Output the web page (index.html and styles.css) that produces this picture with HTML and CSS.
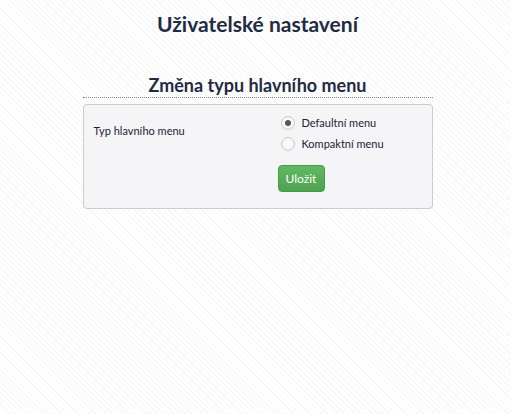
FILE: index.html
```html
<!DOCTYPE html>
<html lang="cs">
<head>
  <meta charset="UTF-8" />
  <title>Uživatelské nastavení</title>
  <link rel="stylesheet" href="styles.css">
</head>
<body>
  <div class="page">
    <h1>Uživatelské nastavení</h1>
    <div class="section">
      <h2>Změna typu hlavního menu</h2>
      <form class="panel">
        <div class="row">
          <label class="field-label">Typ hlavního menu</label>
          <div class="options">
            <label class="radio"><input type="radio" name="menu" checked> Defaultní menu</label>
            <label class="radio"><input type="radio" name="menu"> Kompaktní menu</label>
            <button type="button" class="btn-save">Uložit</button>
          </div>
        </div>
      </form>
    </div>
  </div>
</body>
</html>
```

FILE: styles.css
```css
body {
  margin: 0;
  font-family: 'Lato', 'Open Sans', sans-serif;
  color: #1f2b42;
  background-color: #fff;
  background-image: repeating-linear-gradient(45deg, #fff 0, #fff 3px, #f6f6f6 3px, #f6f6f6 4px);
  min-height: 414px;
}

.page {
  padding-top: 10px;
}

h1 {
  margin: 0;
  text-align: center;
  font-size: 21px;
  font-weight: 700;
  line-height: 28px;
  padding-left: 4px;
}

.section {
  width: 350px;
  margin: 36px auto 0;
  position: relative;
  left: 2px;
}

h2 {
  margin: 0;
  text-align: center;
  font-size: 18px;
  font-weight: 700;
  line-height: 22px;
  padding-bottom: 1px;
  border-bottom: 1px dotted #888;
}

.panel {
  margin-top: 6px;
  background: #f5f5f7;
  border: 1px solid #ccc;
  border-radius: 4px;
  padding: 7px 10px 16px;
}

.row {
  display: flex;
}

.field-label {
  width: 184px;
  font-size: 11px;
  padding-top: 12px;
  color: #1a2438;
}

.options {
  display: flex;
  flex-direction: column;
  align-items: flex-start;
}

.radio {
  display: flex;
  align-items: center;
  font-size: 11px;
  height: 21px;
  color: #1a2438;
}

.radio input {
  appearance: none;
  width: 14px;
  height: 14px;
  margin: 0 7px 0 3px;
  border: 1px solid #cbcbcb;
  border-radius: 50%;
  background: radial-gradient(circle at 50% 40%, #fff, #eee);
  position: relative;
}

.radio input:checked::after {
  content: "";
  position: absolute;
  left: 3px;
  top: 3px;
  width: 6px;
  height: 6px;
  border-radius: 50%;
  background: #555;
}

.btn-save {
  margin-top: 11px;
  font-family: 'Lato', sans-serif;
  font-size: 12px;
  color: #fff;
  background: linear-gradient(#62b862, #4fa24f);
  border: 1px solid #479847;
  border-radius: 4px;
  width: 47px;
  height: 27px;
  padding: 0;
}
```
